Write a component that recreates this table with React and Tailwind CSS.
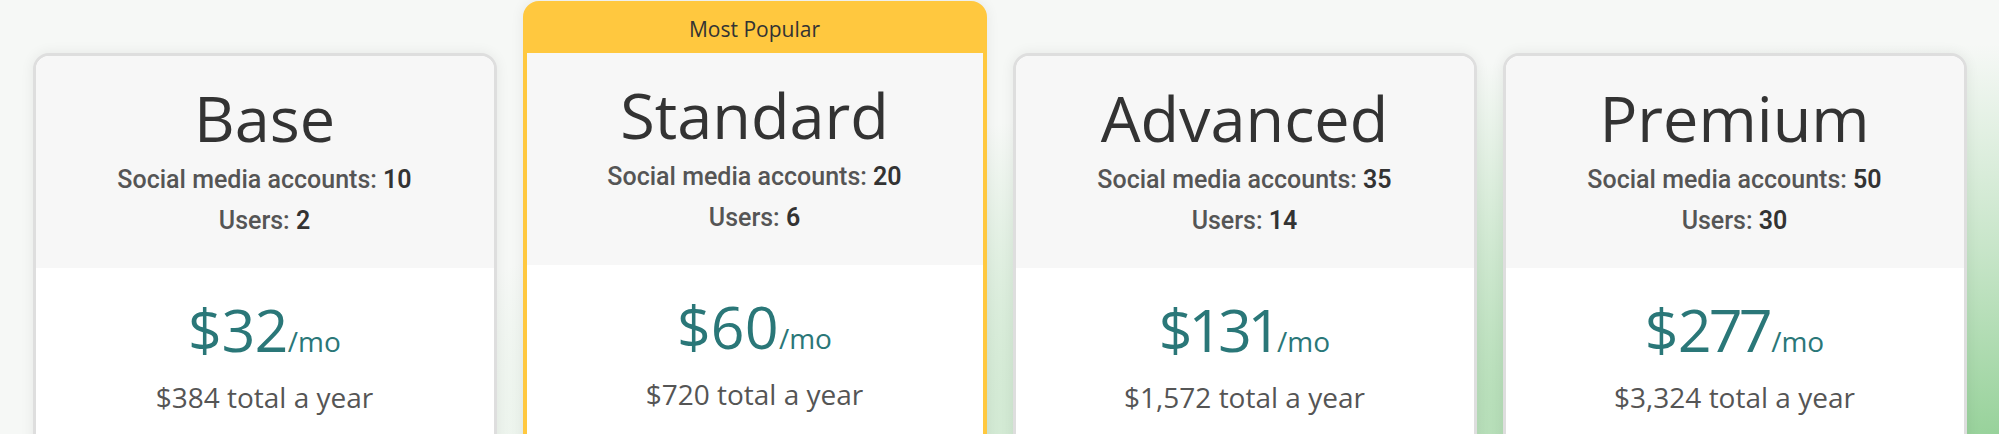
import React from "react";

const plans = [
  { name: "Base", accounts: 10, users: 2, price: 32, total: "$384" },
  { name: "Standard", accounts: 20, users: 6, price: 60, total: "$720", popular: true },
  { name: "Advanced", accounts: 35, users: 14, price: 131, total: "$1,572" },
  { name: "Premium", accounts: 50, users: 30, price: 277, total: "$3,324" },
];

function Card({ plan }) {
  const outer = plan.popular
    ? "w-[464px] shrink-0 rounded-[16px] border-4 border-[#ffc83f] bg-[#ffc83f] overflow-hidden shadow-[0_0_14px_rgba(0,0,0,0.07)]"
    : "mt-[52px] w-[464px] shrink-0 rounded-[16px] border-[3px] border-[#dedede] bg-white overflow-hidden shadow-[0_0_14px_rgba(0,0,0,0.07)]";
  return (
    <div className={outer}>
      {plan.popular && (
        <div className="h-[48px] flex items-center justify-center pt-[2px] text-[21px] font-medium text-[#333] font-['Open_Sans',sans-serif]">
          Most Popular
        </div>
      )}
      <div className="h-[212px] bg-[#f7f7f7] pt-[30px] text-center">
        <h2 className="font-['Open_Sans',sans-serif] text-[63px] leading-[63px] font-normal text-[#333]">
          {plan.name}
        </h2>
        <div className="mt-[10px] font-['Roboto',sans-serif] text-[25px] leading-[41px]">
          <p>
            <span className="font-medium text-[#555]">Social media accounts: </span>
            <span className="font-semibold text-[#333]">{plan.accounts}</span>
          </p>
          <p>
            <span className="font-medium text-[#555]">Users: </span>
            <span className="font-semibold text-[#333]">{plan.users}</span>
          </p>
        </div>
      </div>
      <div className="bg-white pt-[32px] pb-[80px] text-center font-['Open_Sans',sans-serif]">
        <div className="flex items-baseline justify-center text-[#2a7778]">
          <span className="text-[59px] leading-[59px] proportional-nums">${plan.price}</span>
          <span className="text-[28px] leading-[28px]">/mo</span>
        </div>
        <p className="mt-[18px] text-[28px] leading-[40px] text-[#555]">{plan.total} total a year</p>
      </div>
    </div>
  );
}

export default function App() {
  return (
    <div className="h-[434px] w-full overflow-hidden bg-[#f6f8f6] bg-[radial-gradient(2200px_520px_at_100%_100%,#98d29b_0%,rgba(152,210,155,0.5)_35%,rgba(152,210,155,0)_75%)]">
      <div className="flex items-start justify-center gap-[26px] pt-px">
        {plans.map((p) => (
          <Card key={p.name} plan={p} />
        ))}
      </div>
    </div>
  );
}
